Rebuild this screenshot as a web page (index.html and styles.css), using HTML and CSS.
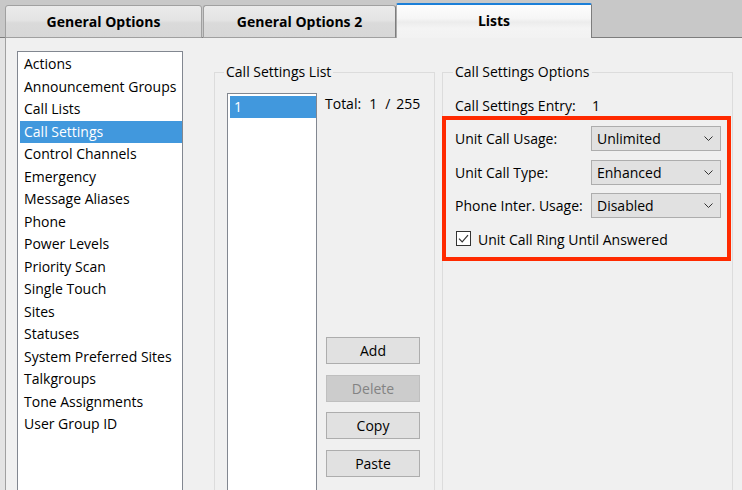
FILE: index.html
```html
<!DOCTYPE html>
<html>
<head>
<meta charset="utf-8">
<title>Lists</title>
<link rel="stylesheet" href="styles.css">
</head>
<body>
<div class="window">
  <div class="tabs">
    <div class="tab tab-1">General Options</div>
    <div class="tab tab-2">General Options 2</div>
    <div class="tab tab-3 active">Lists</div>
  </div>
  <div class="page">
    <ul class="listbox nav">
      <li>Actions</li>
      <li>Announcement Groups</li>
      <li>Call Lists</li>
      <li class="selected">Call Settings</li>
      <li>Control Channels</li>
      <li>Emergency</li>
      <li>Message Aliases</li>
      <li>Phone</li>
      <li>Power Levels</li>
      <li>Priority Scan</li>
      <li>Single Touch</li>
      <li>Sites</li>
      <li>Statuses</li>
      <li>System Preferred Sites</li>
      <li>Talkgroups</li>
      <li>Tone Assignments</li>
      <li>User Group ID</li>
    </ul>

    <fieldset class="group list-group">
      <legend>Call Settings List</legend>
      <div class="list-body">
        <ul class="listbox entries">
          <li class="selected">1</li>
        </ul>
        <div class="side">
          <div class="total"><span>Total:</span><span class="t-num">1</span><span class="t-sep">/</span><span class="t-max">255</span></div>
          <div class="buttons">
            <button class="btn">Add</button>
            <button class="btn" disabled>Delete</button>
            <button class="btn">Copy</button>
            <button class="btn">Paste</button>
          </div>
        </div>
      </div>
    </fieldset>

    <fieldset class="group options">
      <legend>Call Settings Options</legend>
      <div class="entry"><span class="entry-label">Call Settings Entry:</span><span>1</span></div>
      <div class="highlight">
        <div class="row">
          <span class="row-label">Unit Call Usage:</span>
          <div class="combo"><span>Unlimited</span><svg width="9" height="5" viewBox="0 0 9 5"><path d="M0.5 0.5 L4.5 4.5 L8.5 0.5" fill="none" stroke="#333" stroke-width="1"/></svg></div>
        </div>
        <div class="row">
          <span class="row-label">Unit Call Type:</span>
          <div class="combo"><span>Enhanced</span><svg width="9" height="5" viewBox="0 0 9 5"><path d="M0.5 0.5 L4.5 4.5 L8.5 0.5" fill="none" stroke="#333" stroke-width="1"/></svg></div>
        </div>
        <div class="row">
          <span class="row-label">Phone Inter. Usage:</span>
          <div class="combo"><span>Disabled</span><svg width="9" height="5" viewBox="0 0 9 5"><path d="M0.5 0.5 L4.5 4.5 L8.5 0.5" fill="none" stroke="#333" stroke-width="1"/></svg></div>
        </div>
        <div class="check-row">
          <svg class="checkbox" width="15" height="15" viewBox="0 0 15 15"><rect x="0.5" y="0.5" width="14" height="14" fill="#fff" stroke="#333"/><path d="M3 7.6 L6.2 10.8 L12 4.2" fill="none" stroke="#333" stroke-width="1.2"/></svg>
          <span>Unit Call Ring Until Answered</span>
        </div>
      </div>
    </fieldset>
  </div>
</div>
</body>
</html>
```
FILE: styles.css
```css
* { box-sizing: border-box; }
html, body { margin: 0; padding: 0; }
body {
  width: 742px;
  height: 490px;
  overflow: hidden;
  background: #e3e3e3;
  font-family: "Open Sans", "Noto Sans", sans-serif;
  font-size: 14px;
  color: #000;
}
.window {
  width: 742px;
  height: 490px;
  display: flex;
  flex-direction: column;
  overflow: hidden;
}

/* Tabs */
.tabs {
  flex: none;
  height: 38px;
  background: #c8c8c8;
  border-bottom: 1px solid #7d7d7d;
  display: flex;
  align-items: flex-end;
  padding-left: 5px;
}
.tab {
  height: 33px;
  margin-bottom: -1px;
  border: 1px solid #a0a0a0;
  border-radius: 3px 3px 0 0;
  background: linear-gradient(#ebebeb, #e4e4e4 45%, #dadada 55%, #d7d7d7);
  font-weight: 700;
  line-height: 31px;
  text-align: center;
}
.tab-1 { width: 197px; margin-right: 1px; }
.tab-2 { width: 193px; border-right-color: #7d7d7d; }
.tab-3 { width: 196px; }
.tab.active {
  height: 35px;
  border-top: 2px solid #1c7fd8;
  border-left-color: #acacac;
  border-right-color: #7d7d7d;
  border-bottom: none;
  border-radius: 2px 2px 0 0;
  background: linear-gradient(#fdfdfd, #f6f6f6 40%, #ececec 52%, #f4f4f4 70%, #f2f2f2);
  line-height: 32px;
}

/* Page */
.page {
  flex: 1;
  min-height: 0;
  margin-left: 5px;
  border-left: 1px solid #a0a0a0;
  background: #f0f0f0;
  padding-left: 11px;
  display: flex;
  align-items: flex-start;
  overflow: hidden;
}

.listbox {
  list-style: none;
  margin: 0;
  background: #fff;
  border: 1px solid #828790;
}
.listbox li {
  padding-left: 4px;
  white-space: nowrap;
}
.listbox li.selected {
  background: #4198dd;
  color: #fff;
}
.nav {
  margin-top: 13px;
  width: 166px;
  height: 460px;
  padding: 1px 0 0 2px;
}
.nav li {
  height: 22.5px;
  line-height: 22.5px;
}

/* Group boxes */
.group {
  margin: 24px 0 0;
  border: 1px solid #dcdcdc;
  padding: 0 12px;
  height: 470px;
  min-width: 0;
}
.group legend {
  padding: 0 2px;
  margin-left: -3px;
  line-height: 20px;
}
.list-group {
  margin-left: 31px;
  width: 221px;
  padding-top: 11px;
}
.options {
  margin-left: 7px;
  width: 291px;
  padding-top: 14px;
}
.options legend { margin-left: -2px; }

.list-body {
  display: flex;
  gap: 9px;
}
.entries {
  width: 90px;
  height: 420px;
  padding: 2px 0 0 2px;
}
.entries li {
  height: 22px;
  line-height: 22px;
}
.side {
  width: 94px;
}
.total {
  height: 22px;
  line-height: 22px;
  white-space: nowrap;
  margin-left: -1px;
}
.t-num { margin-left: 8px; }
.t-sep { margin-left: 8px; }
.t-max { margin-left: 6px; }
.buttons {
  margin-top: 222px;
  display: flex;
  flex-direction: column;
  gap: 10.5px;
}
.btn {
  width: 94px;
  height: 27px;
  padding: 0;
  background: #e1e1e1;
  border: 1px solid #adadad;
  border-radius: 0;
  font-family: inherit;
  font-size: 14px;
  color: #000;
  line-height: 25px;
}
.btn:disabled {
  background: #cccccc;
  border-color: #bfbfbf;
  color: #838383;
}

/* Options */
.entry {
  height: 20px;
  line-height: 20px;
  white-space: nowrap;
}
.entry-label {
  display: inline-block;
  width: 137px;
}
.highlight {
  margin: 0 -11px 0 -13px;
  border: 4px solid #ff2a00;
  padding: 6px 6px 6px 9px;
}
.row {
  display: flex;
  align-items: center;
  height: 25px;
}
.row + .row { margin-top: 8.5px; }
.row-label {
  width: 136px;
  white-space: nowrap;
}
.combo {
  width: 130px;
  height: 25px;
  background: #e1e1e1;
  border: 1px solid #adadad;
  padding: 0 7px 0 5px;
  display: flex;
  align-items: center;
  justify-content: space-between;
  line-height: 23px;
}
.check-row {
  margin-top: 9px;
  height: 24px;
  display: flex;
  align-items: center;
  gap: 7px;
  white-space: nowrap;
}
.checkbox {
  flex: none;
  margin-left: 1px;
  margin-top: -2px;
}
```
